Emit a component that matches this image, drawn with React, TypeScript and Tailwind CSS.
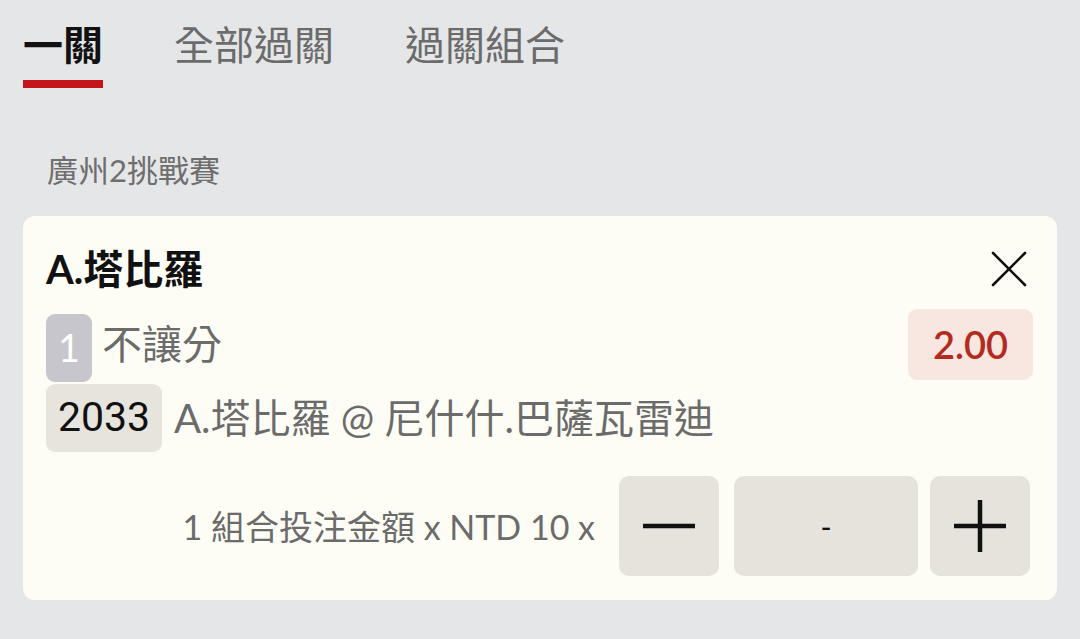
import React from "react";

const font = { fontFamily: "Lato, 'Noto Sans CJK TC', sans-serif" };

export default function App() {
  return (
    <div
      className="w-[1080px] h-[639px] bg-[#e5e6e8] overflow-hidden px-[23px]"
      style={font}
    >
      {/* Tabs */}
      <div className="flex items-start pt-[17px] gap-[71px]">
        <div className="flex flex-col">
          <div className="text-[40px] leading-[56px] font-bold text-[#111]">一關</div>
          <div className="mt-[7px] h-[8px] w-[80px] bg-[#c4141c]" />
        </div>
        <div className="text-[40px] leading-[56px] text-[#6b6b6b]">全部過關</div>
        <div className="text-[40px] leading-[56px] text-[#6b6b6b]">過關組合</div>
      </div>

      {/* League */}
      <div className="mt-[62px] pl-[24px] text-[31px] leading-[40px] text-[#6e6e6e]">
        廣州2挑戰賽
      </div>

      {/* Card */}
      <div className="mt-[26px] bg-[#fdfdf5] rounded-[12px] pt-[24px] pb-[24px] pl-[23px] pr-[24px]">
        <div className="flex items-center justify-between h-[58px]">
          <div className="text-[40px] font-bold text-[#111] leading-[58px]">A.塔比羅</div>
          <svg width="36" height="36" viewBox="0 0 36 36" className="mr-[6px]">
            <path d="M2 2 L34 34 M34 2 L2 34" stroke="#111" strokeWidth="2.6" strokeLinecap="round" />
          </svg>
        </div>

        <div className="mt-[10px] flex items-center justify-between h-[72px]">
          <div className="flex items-center">
            <div className="w-[46px] h-[68px] mt-[7px] rounded-[9px] bg-[#c6c6cc] text-white text-[38px] flex items-center justify-center">
              1
            </div>
            <div className="ml-[10px] text-[40px] text-[#6b6b6b]">不讓分</div>
          </div>
          <div className="w-[125px] h-[71px] rounded-[9px] bg-[#f8e7e0] text-[#b52a20] text-[38px] font-semibold flex items-center justify-center">
            2.00
          </div>
        </div>

        <div className="mt-[4px] flex items-center h-[68px]">
          <div className="h-[68px] w-[116px] rounded-[9px] bg-[#e6e4dd] text-[#111] text-[41px] flex items-center justify-center" style={{ fontFamily: "Roboto, 'Noto Sans CJK TC', sans-serif" }}>
            2033
          </div>
          <div className="ml-[12px] text-[40px] text-[#6b6b6b] whitespace-nowrap">
            A.塔比羅 @ 尼什什.巴薩瓦雷迪
          </div>
        </div>

        <div className="mt-[24px] flex items-center justify-end pr-[3px]">
          <div className="text-[34px] text-[#6b6b6b] whitespace-nowrap mr-[24px]">
            1 組合投注金額 x NTD 10 x
          </div>
          <div className="w-[100px] h-[100px] rounded-[10px] bg-[#e5e3dc] flex items-center justify-center">
            <svg width="52" height="52" viewBox="0 0 52 52">
              <path d="M0 26 H52" stroke="#111" strokeWidth="4.5" />
            </svg>
          </div>
          <div className="ml-[15px] w-[184px] h-[100px] rounded-[10px] bg-[#e5e3dc] flex items-center justify-center text-[30px] text-[#111]">
            -
          </div>
          <div className="ml-[12px] w-[100px] h-[100px] rounded-[10px] bg-[#e5e3dc] flex items-center justify-center">
            <svg width="52" height="52" viewBox="0 0 52 52">
              <path d="M0 26 H52 M26 0 V52" stroke="#111" strokeWidth="4.5" />
            </svg>
          </div>
        </div>
      </div>
    </div>
  );
}
